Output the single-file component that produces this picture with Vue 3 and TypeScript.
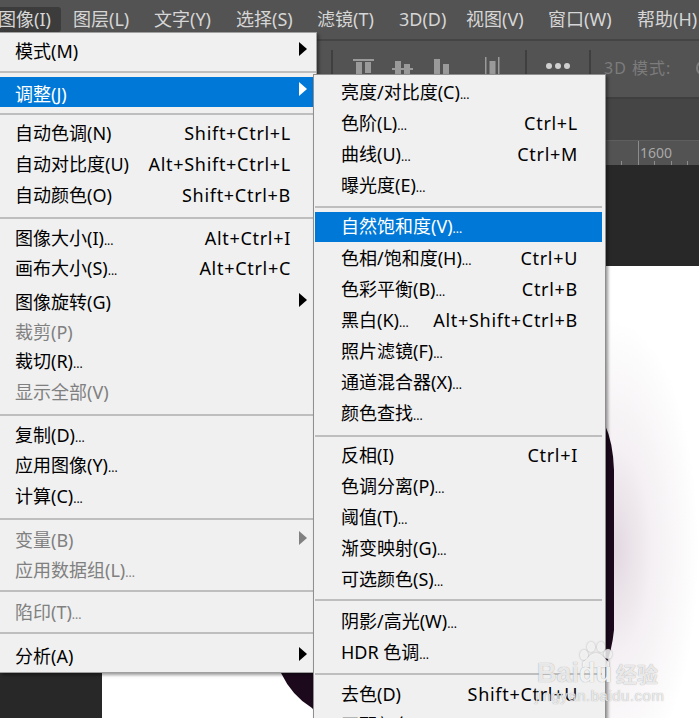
<script setup lang="ts">
interface Row {
  sep?: boolean
  t: string
  k?: string
  h?: number
  mt?: number
  mb?: number
  arrow?: boolean
  off?: boolean
  on?: boolean
}

const menuBar = [
  { t: '图像(I)', w: 61 },
  { t: '图层(L)', w: 81 },
  { t: '文字(Y)', w: 82 },
  { t: '选择(S)', w: 81 },
  { t: '滤镜(T)', w: 82 },
  { t: '3D(D)', w: 67 },
  { t: '视图(V)', w: 82 },
  { t: '窗口(W)', w: 89 },
  { t: '帮助(H)', w: 80 },
]
const ticks = [0, 1, 2, 3, 4]

const sep = (mt: number, mb: number): Row => ({ sep: true, t: '', mt, mb })

const mainMenu: Row[] = [
  { t: '模式(M)', h: 38, arrow: true },
  sep(0, 4),
  { t: '调整(J)', h: 30, arrow: true, on: true },
  sep(6, 3),
  { t: '自动色调(N)', k: 'Shift+Ctrl+L', h: 31 },
  { t: '自动对比度(U)', k: 'Alt+Shift+Ctrl+L', h: 31 },
  { t: '自动颜色(O)', k: 'Shift+Ctrl+B', h: 31 },
  sep(6, 4),
  { t: '图像大小(I)...', k: 'Alt+Ctrl+I', h: 31 },
  { t: '画布大小(S)...', k: 'Alt+Ctrl+C', h: 30 },
  { t: '图像旋转(G)', h: 30, mt: 4, arrow: true },
  { t: '裁剪(P)', h: 29, off: true },
  { t: '裁切(R)...', h: 30 },
  { t: '显示全部(V)', h: 31, off: true },
  sep(6, 4),
  { t: '复制(D)...', h: 31 },
  { t: '应用图像(Y)...', h: 30 },
  { t: '计算(C)...', h: 31 },
  sep(6, 5),
  { t: '变量(B)', h: 31, off: true, arrow: true },
  { t: '应用数据组(L)...', h: 30, off: true },
  sep(4, 5),
  { t: '陷印(T)...', h: 31, off: true },
  sep(4, 7),
  { t: '分析(A)', h: 31, arrow: true },
]

const subMenu: Row[] = [
  { t: '亮度/对比度(C)...', h: 31, mt: 1 },
  { t: '色阶(L)...', k: 'Ctrl+L', h: 31 },
  { t: '曲线(U)...', k: 'Ctrl+M', h: 31 },
  { t: '曝光度(E)...', h: 31 },
  sep(6, 4),
  { t: '自然饱和度(V)...', h: 30, on: true },
  { t: '色相/饱和度(H)...', k: 'Ctrl+U', h: 31 },
  { t: '色彩平衡(B)...', k: 'Ctrl+B', h: 31 },
  { t: '黑白(K)...', k: 'Alt+Shift+Ctrl+B', h: 31 },
  { t: '照片滤镜(F)...', h: 31 },
  { t: '通道混合器(X)...', h: 31 },
  { t: '颜色查找...', h: 31 },
  sep(7, 2),
  { t: '反相(I)', k: 'Ctrl+I', h: 31 },
  { t: '色调分离(P)...', h: 31 },
  { t: '阈值(T)...', h: 31 },
  { t: '渐变映射(G)...', h: 31 },
  { t: '可选颜色(S)...', h: 31 },
  sep(5, 4),
  { t: '阴影/高光(W)...', h: 31 },
  { t: 'HDR 色调...', h: 31 },
  sep(6, 3),
  { t: '去色(D)', k: 'Shift+Ctrl+U', h: 31 },
  { t: '匹配颜色(M)...', h: 31 },
]

function rowStyle(r: Row) {
  return {
    height: r.h ? `${r.h}px` : undefined,
    marginTop: r.mt ? `${r.mt}px` : undefined,
    marginBottom: r.mb ? `${r.mb}px` : undefined,
  }
}

const hasDots = (t: string) => t.endsWith('...')
const stem = (t: string) => (hasDots(t) ? t.slice(0, -3) : t)
</script>

<template>
  <div class="app">
    <header class="menubar">
      <span
        v-for="(m, i) in menuBar"
        :key="m.t"
        class="bar-item"
        :class="{ active: i === 0 }"
        :style="{ width: `${m.w}px` }"
      >{{ m.t }}</span>
    </header>

    <div class="optionbar">
      <i class="divider"></i>
      <svg class="align-icons" width="160" height="26" viewBox="345 50 160 26" fill="#9a9a9a">
        <rect x="353" y="59" width="21" height="2" />
        <rect x="356" y="62" width="6" height="12" />
        <rect x="365" y="62" width="6" height="11" />
        <rect x="392" y="68" width="21" height="2" />
        <rect x="395" y="61" width="6" height="13" />
        <rect x="404" y="64" width="6" height="10" />
        <rect x="434" y="59" width="6" height="15" />
        <rect x="443" y="64" width="6" height="10" />
        <rect x="485" y="57" width="1.5" height="17" />
        <rect x="498" y="57" width="1.5" height="17" />
        <rect x="489.500" y="61" width="6" height="13" />
      </svg>
      <i class="divider second"></i>
      <span class="dots"><b></b><b></b><b></b></span>
      <i class="divider third"></i>
      <span class="mode">3D 模式:</span>
      <i class="mode-ring"></i>
    </div>

    <div class="tabs"></div>

    <div class="ruler">
      <i v-for="n in ticks" :key="n" class="tick" :class="{ major: n === 1 }"></i>
      <span class="ruler-label">1600</span>
    </div>

    <main class="workspace">
      <div class="doc">
        <svg class="artwork" width="597" height="452" viewBox="102 266 597 452">
          <path
            fill="#1c0a1c"
            d="M595 415 L605 425 Q613 442 614 470 L614 630 Q612 650 605 668 L605 718 L320 718 L312 708 Q292 696 281 673 L281 500 Z"
          />
        </svg>
      </div>
    </main>

    <nav class="menu main-menu">
      <template v-for="(r, i) in mainMenu" :key="i">
        <div v-if="r.sep" class="sep" :style="rowStyle(r)"></div>
        <div v-else class="row" :class="{ on: r.on, off: r.off }" :style="rowStyle(r)">
          <span class="label">{{ stem(r.t) }}<span v-if="hasDots(r.t)" class="ell">...</span></span>
          <span v-if="r.k" class="keys">{{ r.k }}</span>
          <i v-if="r.arrow" class="arrow"></i>
        </div>
      </template>
    </nav>

    <nav class="menu sub-menu">
      <template v-for="(r, i) in subMenu" :key="i">
        <div v-if="r.sep" class="sep" :style="rowStyle(r)"></div>
        <div v-else class="row" :class="{ on: r.on, off: r.off }" :style="rowStyle(r)">
          <span class="label">{{ stem(r.t) }}<span v-if="hasDots(r.t)" class="ell">...</span></span>
          <span v-if="r.k" class="keys">{{ r.k }}</span>
        </div>
      </template>
    </nav>

    <div class="watermark">
      <svg class="paw" width="38" height="26" viewBox="0 0 38 26" fill="rgba(255,255,255,.78)">
        <ellipse cx="8" cy="14" rx="4" ry="5" />
        <ellipse cx="15" cy="6" rx="4" ry="5" />
        <ellipse cx="25" cy="6" rx="4" ry="5" />
        <ellipse cx="32" cy="13" rx="4" ry="5" />
        <path d="M20 12 C14 12 12 18 7 21 L7 26 L33 26 L33 21 C28 18 26 12 20 12 Z" />
      </svg>
      <div class="wm-main">
        <span class="wm-bai">Bai</span><span class="wm-du">du</span><span class="wm-jy">经验</span>
      </div>
      <div class="wm-url">jingyan.baidu.com</div>
    </div>
  </div>
</template>

<style scoped>
.app {
  position: relative;
  width: 699px;
  height: 718px;
  overflow: hidden;
  display: flex;
  flex-direction: column;
  background: #282828;
  font-family: "Noto Sans", "Noto Sans CJK SC", sans-serif;
  font-size: 18px;
  color: #000;
}

.menubar {
  flex: none;
  height: 41px;
  box-sizing: border-box;
  display: flex;
  align-items: flex-start;
  padding: 7px 0 0 0;
  background: #535353;
  border-bottom: 2px solid #444;
  color: #d6d6d6;
  white-space: nowrap;
}

.bar-item {
  flex: none;
  height: 25px;
  line-height: 24px;
}

.bar-item.active {
  text-indent: -2px;
  background: #3c3c3c;
  border-radius: 0 3px 3px 0;
  margin-right: 12px;
}

.optionbar {
  flex: none;
  height: 56px;
  display: flex;
  align-items: flex-start;
  background: #535353;
  white-space: nowrap;
}

.divider {
  flex: none;
  width: 2px;
  height: 25px;
  margin: 9px 0 0 331px;
  background: #3f3f3f;
}

.divider.second {
  margin-left: 20px;
}

.divider.third {
  margin-left: 19px;
}

.align-icons {
  flex: none;
  margin: 9px 0 0 12px;
}

.dots {
  flex: none;
  display: flex;
  gap: 3px;
  margin: 22px 0 0 19px;
}

.dots b {
  width: 6px;
  height: 6px;
  border-radius: 50%;
  background: #cfcfcf;
}

.mode {
  flex: none;
  margin: 12px 0 0 13px;
  font-size: 16px;
  line-height: 30px;
  letter-spacing: 1px;
  color: #7c7c7c;
}

.mode-ring {
  flex: none;
  box-sizing: border-box;
  width: 12px;
  height: 14px;
  margin: 20px 0 0 25px;
  border: 2px solid #7c7c7c;
  border-radius: 50%;
}

.tabs {
  flex: none;
  height: 43px;
  box-sizing: border-box;
  background: #454545;
  border-top: 2px solid #3f3f3f;
}

.ruler {
  flex: none;
  position: relative;
  height: 25px;
  box-sizing: border-box;
  display: flex;
  align-items: flex-end;
  gap: 15.500px;
  padding-left: 621px;
  background: #535353;
  border-top: 1px solid #5e5e5e;
}

.tick {
  flex: none;
  width: 1px;
  height: 4px;
  background: #8c8c8c;
}

.tick.major {
  height: 24px;
}

.ruler-label {
  position: absolute;
  left: 640px;
  top: 2px;
  font-size: 14px;
  line-height: 20px;
  color: #a8a8a8;
}

.workspace {
  flex: 1;
  min-height: 0;
  box-sizing: border-box;
  padding: 101px 0 0 102px;
}

.doc {
  position: relative;
  height: 452px;
  background:
    radial-gradient(ellipse 85px 230px at 512px 284px, #e2d8e0 0%, #f4f0f3 45%, #fff 100%);
}

.artwork {
  position: absolute;
  left: 0;
  top: 0;
}

.menu {
  position: absolute;
  box-sizing: border-box;
  background: #f0f0f0;
  white-space: nowrap;
}

.main-menu {
  left: 0;
  top: 32px;
  width: 317px;
  height: 641px;
  border: 1px solid #a0a0a0;
  border-left: none;
  box-shadow: 2px 2px 3px rgba(0, 0, 0, 0.4);
}

.sub-menu {
  left: 313px;
  top: 74px;
  width: 293px;
  height: 700px;
  padding: 0 3px 0 1px;
  border: 1px solid #8f8f8f;
  box-shadow: 2px 2px 3px rgba(0, 0, 0, 0.4);
}

.row {
  position: relative;
  display: flex;
  align-items: center;
  justify-content: space-between;
  box-sizing: border-box;
  padding: 0 25px 2px 15px;
}

.main-menu .row.on {
  padding-top: 4px;
  padding-bottom: 0;
}

.sub-menu .row {
  padding: 0 24px 0 26px;
}

.sub-menu .row.on {
  padding-bottom: 2px;
}

.row.on {
  background: #0078d7;
  color: #fff;
}

.row.off {
  color: #808080;
}

.label,
.keys {
  line-height: 26px;
}

.keys {
  letter-spacing: 0.700px;
}

.ell {
  font-size: 12px;
  line-height: 1;
}

.sep {
  height: 2px;
  background: #bebebe;
}

.arrow {
  position: absolute;
  left: 299px;
  top: 50%;
  margin-top: -10px;
  width: 0;
  height: 0;
  border-left: 8px solid #000;
  border-top: 7.500px solid transparent;
  border-bottom: 7.500px solid transparent;
}

.row.on .arrow {
  border-left-color: #fff;
}

.row.off .arrow {
  border-left-color: #808080;
}

.watermark {
  position: absolute;
  left: 535px;
  top: 641px;
  width: 130px;
  height: 65px;
  color: rgba(255, 255, 255, 0.78);
  white-space: nowrap;
}

.paw {
  position: absolute;
  left: 41px;
  top: 0;
  filter: drop-shadow(0 0 1px rgba(110, 110, 110, 0.6));
}

.wm-main {
  position: absolute;
  left: 2px;
  top: 17px;
  font-family: "Liberation Sans", sans-serif;
  font-weight: 700;
  font-size: 27px;
  line-height: 30px;
  display: flex;
  text-shadow: 0 0 1px rgba(110, 110, 110, 0.7);
}

.wm-du {
  color: rgba(255, 255, 255, 0.88);
}

.wm-jy {
  margin-left: 4px;
  font-family: "Noto Sans CJK SC", sans-serif;
  font-size: 21px;
}

.wm-url {
  position: absolute;
  left: 0;
  top: 46px;
  font-family: "Liberation Sans", sans-serif;
  font-size: 15px;
  line-height: 18px;
  letter-spacing: 0.500px;
  text-shadow: 0 0 1px rgba(110, 110, 110, 0.7);
}
</style>
